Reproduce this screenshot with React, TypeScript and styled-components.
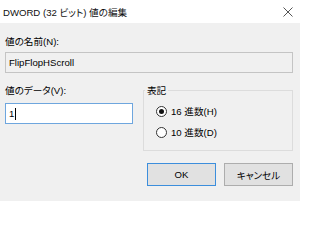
import React from "react";
import styled, { createGlobalStyle } from "styled-components";

const Global = createGlobalStyle`
  html, body { margin: 0; padding: 0; }
  body { width: 300px; height: 201px; overflow: hidden; }
  * { box-sizing: border-box; }
`;

const FONT = `"Liberation Sans", "Noto Sans CJK JP", sans-serif`;

const Window = styled.div`
  width: 300px;
  height: 201px;
  display: flex;
  flex-direction: column;
  font-family: ${FONT};
  font-size: 9.6px;
  font-feature-settings: "palt";
  color: #000;
  background: #f0f0f0;
`;

const TitleBar = styled.div`
  height: 23px;
  background: #fff;
  display: flex;
  align-items: center;
  justify-content: space-between;
  padding: 0 7px 0 3px;
  font-size: 9.6px;
  color: #111;
`;

const TitleText = styled.span`
  line-height: 23px;
  padding-top: 1px;
`;

const CloseIcon = () => (
  <svg width="10" height="10" viewBox="0 0 10 10">
    <path d="M0.5 0.5 L9.5 9.5 M9.5 0.5 L0.5 9.5" stroke="#555" strokeWidth="1" />
  </svg>
);

const Body = styled.div`
  flex: 1;
  padding: 11px 7px 0 5px;
  display: flex;
  flex-direction: column;
`;

const Label = styled.div`
  line-height: 15px;
  height: 15px;
  white-space: nowrap;
`;

const Field = styled.div<{ $focused?: boolean }>`
  height: 21px;
  border: 1px solid ${(p) => (p.$focused ? "#6ea6de" : "#c4c4c4")};
  background: ${(p) => (p.$focused ? "#fff" : "#f0f0f0")};
  display: flex;
  align-items: center;
  padding: 0 3px 0 3px;
  white-space: nowrap;
`;

const Caret = styled.span`
  display: inline-block;
  width: 1px;
  height: 12px;
  background: #000;
  margin-left: 1px;
`;

const NameField = styled(Field)`
  margin-top: 3px;
`;

const Row = styled.div`
  margin-top: 10px;
  display: grid;
  grid-template-columns: 128px 150px;
  column-gap: 10px;
  align-items: start;
`;

const Column = styled.div`
  display: flex;
  flex-direction: column;
  gap: 5px;
`;

const Group = styled.fieldset`
  margin: 0;
  height: 68px;
  border: 1px solid #dcdcdc;
  padding: 0 0 0 12px;
  display: flex;
  flex-direction: column;
  gap: 6px;
`;

const Legend = styled.legend`
  padding: 0 2px;
  margin-left: -11px;
  line-height: 15px;
  font-size: 9.6px;
`;

const RadioRow = styled.label`
  display: flex;
  align-items: center;
  gap: 4px;
  height: 15px;
  line-height: 15px;
  white-space: nowrap;
  &:first-of-type {
    margin-top: 6px;
  }
`;

const RadioCircle = styled.span<{ $checked?: boolean }>`
  width: 11px;
  height: 11px;
  border-radius: 50%;
  border: 1px solid #333;
  background: #fff;
  display: flex;
  align-items: center;
  justify-content: center;
  &::after {
    content: "";
    width: 5px;
    height: 5px;
    border-radius: 50%;
    background: #111;
    display: ${(p) => (p.$checked ? "block" : "none")};
  }
`;

const Buttons = styled.div`
  margin-top: 12px;
  display: flex;
  justify-content: flex-end;
  gap: 8px;
`;

const Button = styled.button<{ $default?: boolean }>`
  width: 69px;
  height: 23px;
  margin: 0;
  padding: 0;
  font-family: ${FONT};
  font-size: 9.6px;
  font-feature-settings: "palt";
  color: #000;
  background: #e1e1e1;
  border: 1px solid ${(p) => (p.$default ? "#3c8edc" : "#adadad")};
  display: flex;
  align-items: center;
  justify-content: center;
`;

export default function App() {
  return (
    <>
      <Global />
      <Window>
        <TitleBar>
          <TitleText>DWORD (32 ビット) 値の編集</TitleText>
          <CloseIcon />
        </TitleBar>
        <Body>
          <Label>値の名前(N):</Label>
          <NameField>FlipFlopHScroll</NameField>
          <Row>
            <Column>
              <Label>値のデータ(V):</Label>
              <Field $focused>
                1<Caret />
              </Field>
            </Column>
            <Group>
              <Legend>表記</Legend>
              <RadioRow>
                <RadioCircle $checked />
                16 進数(H)
              </RadioRow>
              <RadioRow>
                <RadioCircle />
                10 進数(D)
              </RadioRow>
            </Group>
          </Row>
          <Buttons>
            <Button $default>OK</Button>
            <Button>キャンセル</Button>
          </Buttons>
        </Body>
      </Window>
    </>
  );
}
